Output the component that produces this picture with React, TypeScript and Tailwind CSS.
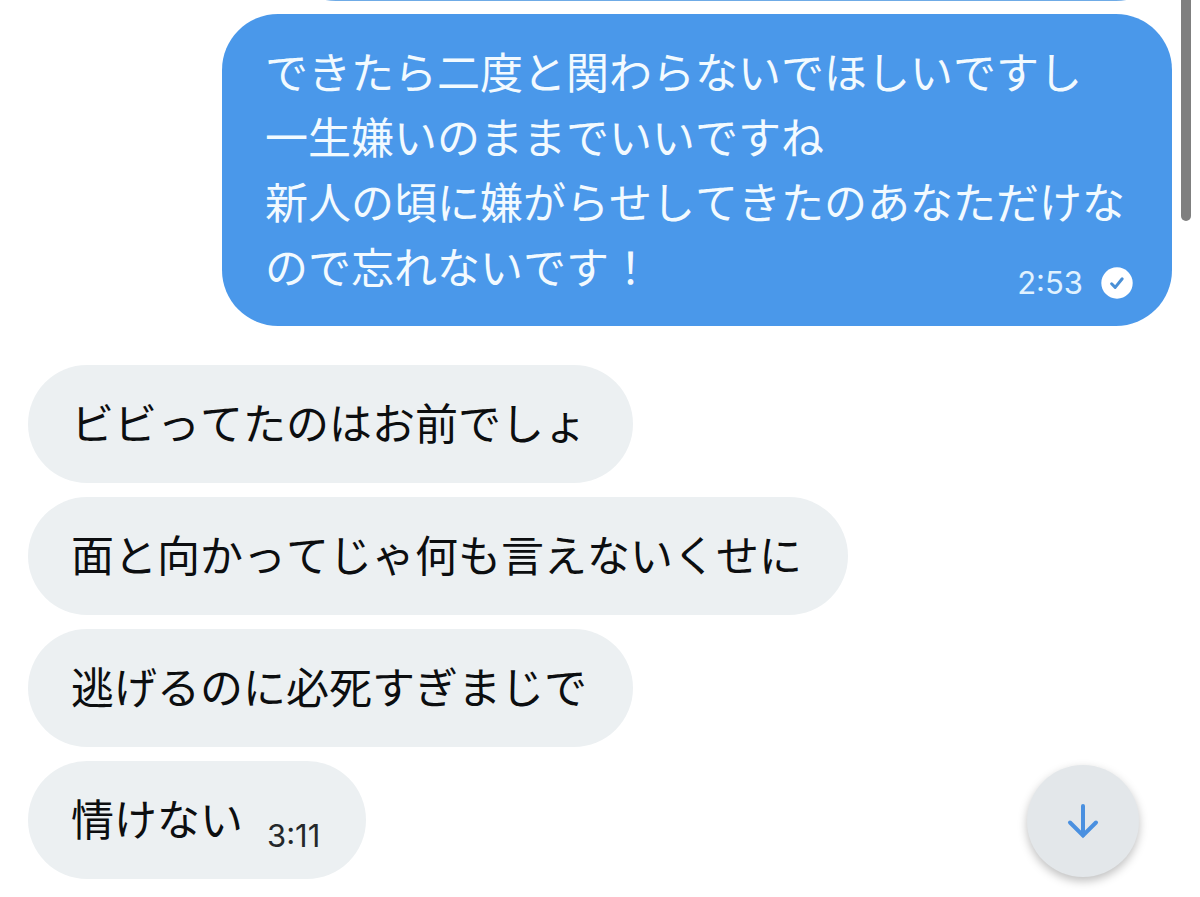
type IncomingMessage = {
  text: string;
  time?: string;
};

const incoming: IncomingMessage[] = [
  { text: "ビビってたのはお前でしょ" },
  { text: "面と向かってじゃ何も言えないくせに" },
  { text: "逃げるのに必死すぎまじで" },
  { text: "情けない", time: "3:11" },
];

const outgoing = {
  lines: [
    "できたら二度と関わらないでほしいですし",
    "一生嫌いのままでいいですね",
    "新人の頃に嫌がらせしてきたのあなただけな",
  ],
  lastLine: "ので忘れないです！",
  time: "2:53",
};

function SentIcon() {
  return (
    <svg viewBox="0 0 32 32" className="w-8 h-8" role="img" aria-label="送信済み">
      <circle cx="16" cy="16" r="15.7" fill="#fff" />
      <path
        d="M10.6 16.8l3.6 3.6 7-8.6"
        fill="none"
        stroke="#4a90d6"
        strokeWidth="3"
        strokeLinecap="round"
        strokeLinejoin="round"
      />
    </svg>
  );
}

function OutgoingBubble() {
  return (
    <div className="self-end max-w-[84%] pl-[43px] pr-[39px] pt-[27px] pb-[25px] rounded-[56px] bg-[#4a98ea] text-[#f2faff] text-[43px] leading-[65px]">
      {outgoing.lines.map((line) => (
        <p key={line} className="pr-2">{line}</p>
      ))}
      {/* The time and the sent mark share the last line */}
      <div className="flex items-end justify-between">
        <p>{outgoing.lastLine}</p>
        <div className="flex items-center gap-[18px] pb-0.5">
          <time className="text-[31px] leading-8 text-[#e0f2ff]">{outgoing.time}</time>
          <SentIcon />
        </div>
      </div>
    </div>
  );
}

function IncomingBubble({ text, time }: IncomingMessage) {
  return (
    <li className="flex items-end gap-6 max-w-[84%] pl-[43px] pr-[46px] py-[27px] rounded-[59px] bg-[#ecf0f2] text-[#0c0e10] text-[43px] leading-[64px]">
      <p>{text}</p>
      {time && <time className="text-[31px] leading-8 text-[#25282b]">{time}</time>}
    </li>
  );
}

export default function App() {
  return (
    <main
      lang="ja"
      className="relative min-h-screen overflow-hidden bg-white font-['Inter','Noto_Sans_CJK_JP',sans-serif] [font-kerning:none]"
    >
      <div className="flex flex-col px-7 pb-4">
        {/* Previous message, scrolled almost out of view */}
        <div className="self-end w-[78%] h-[118px] -mt-[117px] mb-[13px] rounded-[56px] bg-[#6fabe6]" />

        <OutgoingBubble />

        <ul className="flex flex-col items-start gap-3.5 mt-[39px]">
          {incoming.map((message) => (
            <IncomingBubble key={message.text} {...message} />
          ))}
        </ul>
      </div>

      {/* Scroll indicator */}
      <div className="absolute top-0 right-[9px] w-2.5 h-[221px] rounded-b-full bg-[#7f7f7f]" />

      <button
        type="button"
        aria-label="最新のメッセージへ"
        className="fixed right-[61px] bottom-5 flex items-center justify-center w-28 h-28 rounded-full bg-[#e3e7ea] shadow-[0_4px_10px_rgba(0,0,0,0.25)]"
      >
        <svg
          viewBox="0 0 32 36"
          className="w-8 h-9"
          fill="none"
          stroke="#4a90e0"
          strokeWidth="4"
          strokeLinecap="round"
        >
          <path d="M16 3v29" />
          <path d="M3 19.5l13 13 13-13" />
        </svg>
      </button>
    </main>
  );
}
